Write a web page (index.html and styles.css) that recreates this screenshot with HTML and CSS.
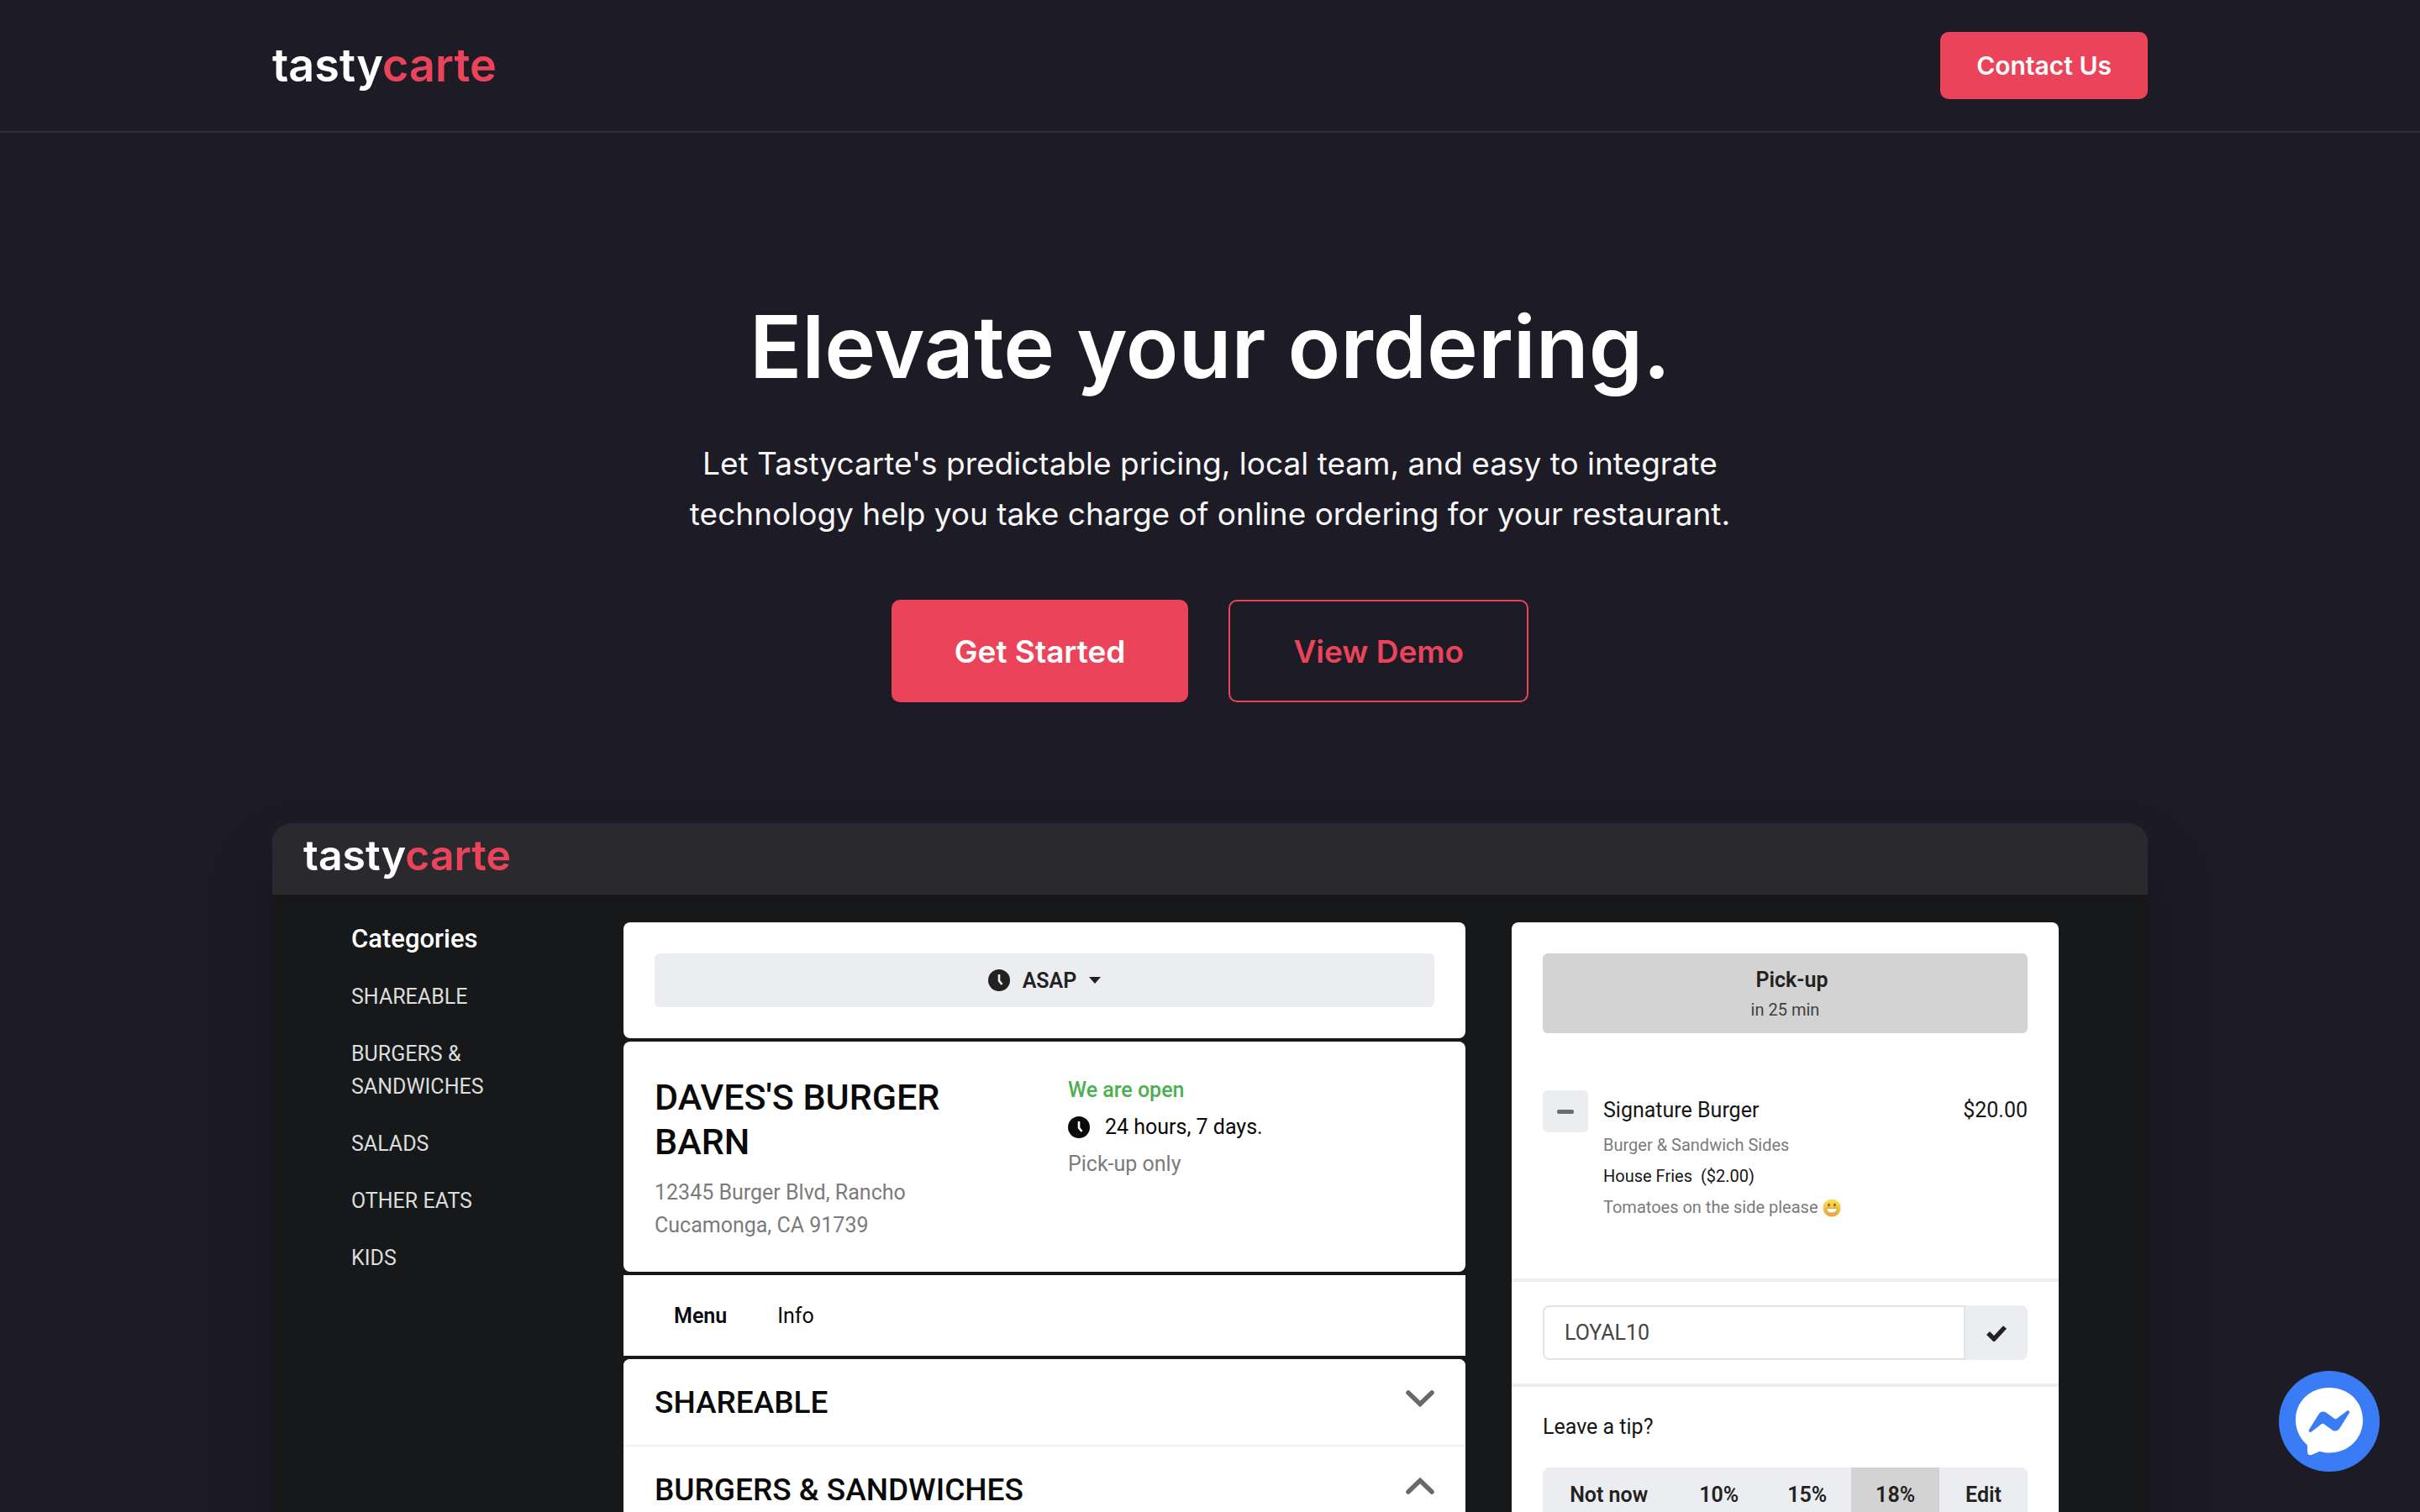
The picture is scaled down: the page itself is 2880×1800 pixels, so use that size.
FILE: index.html
```html
<!DOCTYPE html>
<html lang="en">
<head>
<meta charset="utf-8">
<meta name="viewport" content="width=device-width, initial-scale=1">
<title>Tastycarte</title>
<link rel="stylesheet" href="styles.css">
</head>
<body>
<header class="site-header">
  <div class="container header-row">
    <a class="logo" href="#">tasty<span class="accent">carte</span></a>
    <button class="btn btn-small" type="button">Contact Us</button>
  </div>
</header>
<main class="container hero">
  <h1 class="hero-title">Elevate your ordering.</h1>
  <p class="hero-text">Let Tastycarte's predictable pricing, local team, and easy to integrate technology help you take charge of online ordering for your restaurant.</p>
  <div class="hero-actions">
    <button class="btn btn-large" type="button">Get Started</button>
    <button class="btn btn-large btn-outline" type="button">View Demo</button>
  </div>
  <section class="demo">
    <div class="demo-bar"><span class="logo logo-small">tasty<span class="accent">carte</span></span></div>
    <div class="demo-body">
      <nav class="categories">
        <h2 class="categories-title">Categories</h2>
        <a href="#">SHAREABLE</a>
        <a href="#">BURGERS &amp; SANDWICHES</a>
        <a href="#">SALADS</a>
        <a href="#">OTHER EATS</a>
        <a href="#">KIDS</a>
      </nav>
      <div class="menu">
        <div class="card time-card">
          <button class="time-button" type="button">
            <svg class="icon-clock" viewBox="0 0 26 26" aria-hidden="true"><circle cx="13" cy="13" r="13" fill="currentColor"/><path d="M13 6v7.500l3.500 4.500" fill="none" stroke="#ecedf0" stroke-width="2.600"/></svg>
            <span>ASAP</span>
            <svg class="icon-caret" viewBox="0 0 14 8" aria-hidden="true"><path d="M0 0h14L7 8z" fill="currentColor"/></svg>
          </button>
        </div>
        <div class="card restaurant">
          <div>
            <h2 class="restaurant-name">DAVES'S BURGER BARN</h2>
            <p class="address muted">12345 Burger Blvd, Rancho<br>Cucamonga, CA 91739</p>
          </div>
          <div class="hours">
            <p class="open">We are open</p>
            <p class="hours-row"><svg class="icon-clock" viewBox="0 0 26 26" aria-hidden="true"><circle cx="13" cy="13" r="13" fill="currentColor"/><path d="M13 6v7.500l3.500 4.500" fill="none" stroke="#fff" stroke-width="2.600"/></svg>24 hours, 7 days.</p>
            <p class="muted">Pick-up only</p>
          </div>
        </div>
        <div class="tabs">
          <a class="tab-active" href="#">Menu</a>
          <a href="#">Info</a>
        </div>
        <div class="card">
          <button class="section-row" type="button">SHAREABLE
            <svg class="icon-chevron" viewBox="0 0 34 20" aria-hidden="true"><path d="M3 3l14 13.500L31 3" fill="none" stroke="currentColor" stroke-width="5.500" stroke-linecap="round"/></svg>
          </button>
          <button class="section-row" type="button">BURGERS &amp; SANDWICHES
            <svg class="icon-chevron" viewBox="0 0 34 20" aria-hidden="true"><path d="M3 17L17 3.500 31 17" fill="none" stroke="currentColor" stroke-width="5.500" stroke-linecap="round"/></svg>
          </button>
        </div>
      </div>
      <aside class="card order">
        <div class="order-items">
          <button class="pickup" type="button"><span class="pickup-title">Pick-up</span><span class="pickup-time">in 25 min</span></button>
          <div class="item">
            <button class="minus" type="button" aria-label="Remove"><svg viewBox="0 0 20 5" aria-hidden="true"><rect width="20" height="5" rx="2" fill="#6c6d70"/></svg></button>
            <div class="item-info">
              <div class="item-head"><span>Signature Burger</span><span>$20.00</span></div>
              <p class="muted">Burger &amp; Sandwich Sides</p>
              <p>House Fries&nbsp; ($2.00)</p>
              <p class="muted note">Tomatoes on the side please
                <svg class="icon-smile" viewBox="0 0 22 22" aria-hidden="true"><defs><linearGradient id="face" x1="0" y1="0" x2="0" y2="1"><stop offset="0" stop-color="#fbe05a"/><stop offset="1" stop-color="#eea32c"/></linearGradient></defs><circle cx="11" cy="11" r="10.500" fill="url(#face)"/><ellipse cx="7.500" cy="7.500" rx="1.200" ry="1.900" fill="#8a5a1e"/><ellipse cx="14.500" cy="7.500" rx="1.200" ry="1.900" fill="#8a5a1e"/><path d="M4.500 11.500h13q-.5 5.500-6.500 5.500t-6.500-5.500z" fill="#fff" stroke="#c08a3a" stroke-width=".7"/></svg>
              </p>
            </div>
          </div>
        </div>
        <div class="promo">
          <input class="promo-input" type="text" value="LOYAL10" aria-label="Promo code">
          <button class="promo-apply" type="button" aria-label="Apply"><svg class="icon-check" viewBox="0 0 26 20" aria-hidden="true"><path d="M3 10l7 7L23 3" fill="none" stroke="currentColor" stroke-width="5.500"/></svg></button>
        </div>
        <div class="tip">
          <p>Leave a tip?</p>
          <div class="tip-options">
            <button type="button">Not now</button>
            <button type="button">10%</button>
            <button type="button">15%</button>
            <button class="selected" type="button">18%</button>
            <button type="button">Edit</button>
          </div>
        </div>
      </aside>
    </div>
  </section>
</main>
<button class="chat" type="button" aria-label="Chat">
  <svg viewBox="0 0 120 120" aria-hidden="true"><path d="M60 20c-23 0-40 16.500-40 38.500 0 11.500 5 21.500 12.500 28.500 1 1 1.500 2 1.500 3.500v6.500c0 2.500 2.500 4 5 3l8-3.500c1-.5 2-.5 3-.2 3 .8 6.500 1.200 10 1.200 23 0 40-17 40-39S83 20 60 20z" fill="#fff"/><path d="M36 70l11.500-18.500c2-3.200 6-4 9-1.800l9.500 7c1 .7 2 .7 3 0l12-9c1.800-1.400 4 .7 2.800 2.600L72.300 68.500c-2 3.200-6 4-9 1.800l-9.500-7c-1-.7-2-.7-3 0l-12 9.300c-1.800 1.400-4-.7-2.800-2.600z" fill="#3a7bf6"/></svg>
</button>
</body>
</html>
```
FILE: styles.css
```css
* { box-sizing: border-box; }

body {
  margin: 0;
  height: 100vh;
  overflow: hidden;
  background: #1d1b26;
  color: #fff;
  font-family: Inter, "Liberation Sans", sans-serif;
}

h1, h2, p { margin: 0; }
a { color: inherit; text-decoration: none; }
svg { display: block; flex: none; }

button {
  border: 0;
  padding: 0;
  font: inherit;
  color: inherit;
  cursor: pointer;
}

.container {
  width: calc(100% - 96px);
  max-width: 2232px;
  margin: 0 auto;
}

.site-header {
  padding: 38px 0;
  border-bottom: 2px solid #302e3b;
}

.header-row {
  display: flex;
  align-items: center;
  justify-content: space-between;
}

.logo {
  font-size: 54px;
  font-weight: 600;
  line-height: 76px;
}
.logo-small { font-size: 50px; }
.accent { color: #eb445a; }

.btn {
  background: #eb445a;
  border-radius: 10px;
  font-weight: 600;
}
.btn-small {
  height: 80px;
  padding: 0 43px;
  font-size: 30px;
}
.btn-large {
  height: 122px;
  padding: 0 75px;
  font-size: 37px;
}
.btn-outline {
  background: none;
  border: 2px solid #eb445a;
  color: #eb445a;
}

.hero {
  padding-top: 199px;
  text-align: center;
}
.hero-title {
  font-size: 103px;
  font-weight: 600;
  line-height: 112px;
}
.hero-text {
  max-width: 1280px;
  margin: 53px auto 72px;
  font-size: 37px;
  line-height: 60px;
  color: #f7f7f8;
}
.hero-actions {
  display: flex;
  justify-content: center;
  gap: 48px;
}

.demo {
  margin-top: 144px;
  border-radius: 22px;
  background: #17181a;
  box-shadow: 0 50px 80px rgba(0, 0, 0, 0.3);
  text-align: left;
  font-family: Roboto, "Liberation Sans", sans-serif;
  font-size: 25px;
  line-height: 39px;
}
.demo-bar {
  height: 85px;
  padding-left: 37px;
  border-radius: 22px 22px 0 0;
  background: #2a292e;
  font-family: Inter, "Liberation Sans", sans-serif;
}
.demo-body {
  display: grid;
  grid-template-columns: 269px minmax(0, 1002fr) minmax(0, 651fr);
  align-items: start;
  gap: 55px;
  padding: 33px 106px 80px 94px;
}

.categories {
  display: flex;
  flex-direction: column;
  gap: 29px;
  width: 200px;
  color: #dcdddd;
}
.categories-title {
  font-size: 31px;
  font-weight: 500;
  line-height: 40px;
  color: #fff;
}

.menu {
  display: flex;
  flex-direction: column;
  gap: 4px;
  color: #0a0a0a;
}
.card {
  border-radius: 8px;
  background: #fff;
  overflow: hidden;
}
.muted { color: #7b7b7b; }

.time-card { padding: 37px; }
.time-button {
  display: flex;
  align-items: center;
  justify-content: center;
  gap: 15px;
  width: 100%;
  height: 64px;
  border-radius: 6px;
  background: #ecedf0;
  color: #222;
  font-weight: 600;
}
.icon-clock { width: 26px; height: 26px; }
.icon-caret { width: 14px; height: 8px; }

.restaurant {
  display: grid;
  grid-template-columns: 437px 1fr;
  gap: 55px;
  padding: 36px 37px;
}
.restaurant-name {
  max-width: 380px;
  margin: 4px 0 14px;
  font-size: 43px;
  font-weight: 500;
  line-height: 53px;
}
.hours { line-height: 44px; }
.open { color: #4caf50; font-weight: 500; }
.hours-row {
  display: flex;
  align-items: center;
  gap: 18px;
}

.tabs {
  display: flex;
  align-items: center;
  gap: 60px;
  height: 96px;
  padding: 0 60px;
  background: #fff;
}
.tab-active { font-weight: 600; }

.section-row {
  display: flex;
  align-items: center;
  justify-content: space-between;
  width: 100%;
  height: 104px;
  padding: 0 37px;
  border-bottom: 2px solid #f1f1f1;
  background: #fff;
  font-size: 37px;
  font-weight: 500;
}
.icon-chevron {
  width: 34px;
  height: 20px;
  margin-bottom: 8px;
  color: #696969;
}

.order { color: #161616; }
.order-items { padding: 37px 37px 66px; }
.pickup {
  display: flex;
  flex-direction: column;
  align-items: center;
  width: 100%;
  padding: 14px 0 11px;
  border-radius: 6px;
  background: #d3d3d4;
}
.pickup-title {
  padding-left: 16px;
  font-weight: 600;
  line-height: 36px;
  color: #222;
}
.pickup-time {
  font-size: 20px;
  line-height: 34px;
  color: #404040;
}
.item {
  display: flex;
  gap: 18px;
  margin-top: 68px;
}
.minus {
  display: grid;
  place-items: center;
  width: 54px;
  height: 50px;
  border-radius: 6px;
  background: #ecedf0;
}
.minus svg { width: 20px; height: 5px; }
.item-info {
  flex: 1;
  font-size: 20px;
  line-height: 37px;
}
.item-head {
  display: flex;
  justify-content: space-between;
  font-size: 25px;
  line-height: 47px;
}
.note {
  display: flex;
  align-items: center;
  gap: 5px;
}
.icon-smile { width: 22px; height: 22px; }

.promo {
  display: flex;
  padding: 28px 37px;
  border: solid #eee;
  border-width: 4px 0;
}
.promo-input {
  flex: 1;
  min-width: 0;
  height: 65px;
  padding: 0 24px;
  border: 2px solid #e2e3e8;
  border-radius: 8px 0 0 8px;
  background: #fff;
  color: #444;
  font: inherit;
}
.promo-apply {
  display: grid;
  place-items: center;
  width: 74px;
  border-radius: 0 8px 8px 0;
  background: #ecedf0;
  color: #222;
}
.icon-check { width: 26px; height: 20px; }

.tip { padding: 28px 37px 60px; }
.tip-options {
  display: grid;
  grid-template-columns: 3fr 2fr 2fr 2fr 2fr;
  margin-top: 29px;
  border-radius: 8px;
  background: #ecedf0;
  overflow: hidden;
}
.tip-options button {
  height: 65px;
  background: none;
  color: #222;
  font-weight: 600;
}
.tip-options .selected { background: #d3d3d4; }

.chat {
  position: fixed;
  right: 48px;
  bottom: 48px;
  width: 120px;
  height: 120px;
  border-radius: 50%;
  background: #3a7bf6;
}
```
